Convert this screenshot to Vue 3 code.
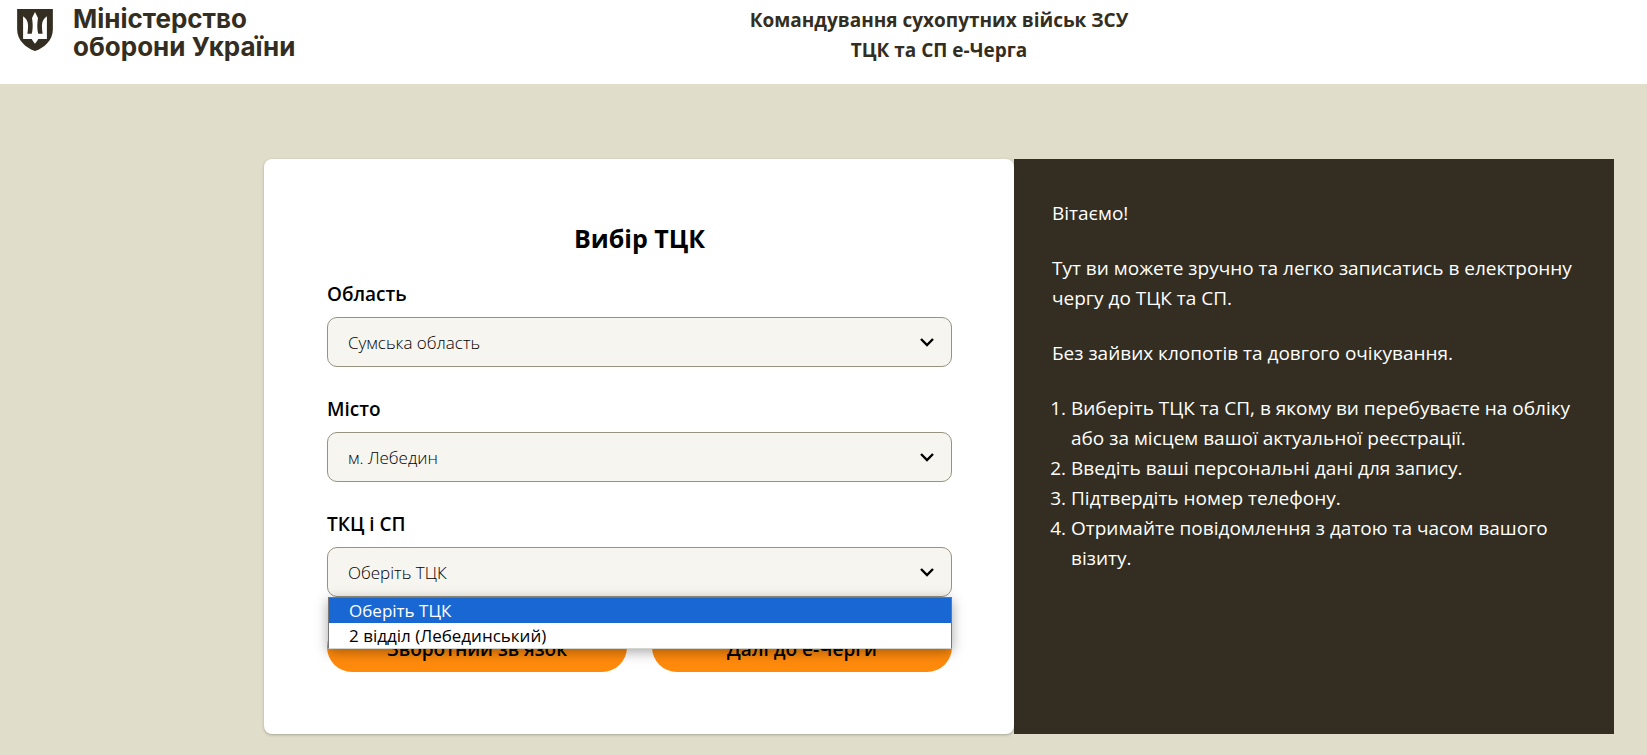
<script setup>
import { ref } from 'vue'

const fields = ref([
  { id: 'region', label: 'Область', value: 'Сумська область', options: ['Сумська область'], open: false },
  { id: 'city', label: 'Місто', value: 'м. Лебедин', options: ['м. Лебедин'], open: false },
  {
    id: 'centre',
    label: 'ТКЦ і СП',
    value: 'Оберіть ТЦК',
    options: ['Оберіть ТЦК', '2 відділ (Лебединський)'],
    open: true,
  },
])

const steps = [
  'Виберіть ТЦК та СП, в якому ви перебуваєте на обліку або за місцем вашої актуальної реєстрації.',
  'Введіть ваші персональні дані для запису.',
  'Підтвердіть номер телефону.',
  'Отримайте повідомлення з датою та часом вашого візиту.',
]

function choose(field, option) {
  field.value = option
  field.open = false
}
</script>

<template>
  <div class="page">
    <header class="header">
      <a class="brand" href="#">
        <svg class="shield" viewBox="0 0 108 127" aria-hidden="true">
          <path d="M0 0H108V62C108 94 82 118 54 127C26 118 0 94 0 62Z" fill="#332e21" />
          <path
            d="M18 22C27 28 33 37 33 50C33 60 32 68 31 75H44C46 68 47 60 47 50C47 42 46 34 45 27C48 21 51 15 54 9C57 15 60 21 63 27C62 34 61 42 61 50C61 60 62 68 64 75H77C76 68 75 60 75 50C75 37 81 28 90 22V91H64C62 95 58 100 54 105C50 100 46 95 44 91H18Z"
            fill="#fff"
          />
        </svg>
        <span class="brand-name">Міністерство<br />оборони України</span>
      </a>
      <div class="title">Командування сухопутних військ ЗСУ<br />ТЦК та СП е-Черга</div>
    </header>

    <main class="main">
      <form class="card" @submit.prevent>
        <h1 class="heading">Вибір ТЦК</h1>

        <div v-for="field in fields" :key="field.id" class="field">
          <label class="label" :for="field.id">{{ field.label }}</label>
          <div class="control">
            <select :id="field.id" v-model="field.value" class="select">
              <option v-for="option in field.options" :key="option">{{ option }}</option>
            </select>
            <svg class="chevron" viewBox="0 0 14 10" aria-hidden="true">
              <path d="M1 2L7 8L13 2" fill="none" stroke="#000" stroke-width="2.4" />
            </svg>
            <ul v-if="field.open" class="menu" role="listbox" :aria-label="field.label">
              <li
                v-for="option in field.options"
                :key="option"
                class="option"
                :class="{ active: option === field.value }"
                role="option"
                :aria-selected="option === field.value"
                @click="choose(field, option)"
              >
                {{ option }}
              </li>
            </ul>
          </div>
        </div>

        <div class="actions">
          <button class="button" type="button">Зворотний зв'язок</button>
          <button class="button" type="submit">Далі до е-Черги</button>
        </div>
      </form>

      <aside class="info">
        <p>Вітаємо!</p>
        <p>Тут ви можете зручно та легко записатись в електронну чергу до ТЦК та СП.</p>
        <p>Без зайвих клопотів та довгого очікування.</p>
        <ol class="steps">
          <li v-for="step in steps" :key="step">{{ step }}</li>
        </ol>
      </aside>
    </main>
  </div>
</template>

<style>
body {
  background: #e0ddca;
}
</style>

<style scoped>
.page {
  min-height: 100vh;
  box-sizing: border-box;
  font-family: 'Open Sans', 'Noto Sans', sans-serif;
  font-size: 19px;
  line-height: 30px;
  color: #000;
}

.header {
  display: grid;
  grid-template-columns: 264px 1fr;
  height: 84px;
  box-sizing: border-box;
  padding: 5px 33px 0 0;
  background: #fff;
  color: #332e21;
}

.brand {
  display: flex;
  align-items: flex-start;
  gap: 20px;
  padding-left: 17px;
  color: inherit;
  text-decoration: none;
  white-space: nowrap;
}

.shield {
  flex: none;
  width: 36px;
  height: 42px;
  margin-top: 4px;
}

.brand-name {
  font-family: Inter, sans-serif;
  font-size: 26px;
  font-weight: 700;
  line-height: 28px;
}

.title {
  font-weight: 700;
  text-align: center;
}

.main {
  display: grid;
  grid-template-columns: 5fr 4fr;
  padding: 75px 33px 21px 264px;
}

.card {
  box-sizing: border-box;
  padding: 62px 62px 62px 63px;
  border-radius: 8px;
  background: #fff;
  box-shadow: 0 1px 3px rgba(0, 0, 0, 0.25);
}

.heading {
  margin: 0;
  font-size: 25px;
  font-weight: 700;
  line-height: 34px;
  text-align: center;
}

.field {
  padding-top: 27px;
}

.heading + .field {
  padding-top: 24px;
}

.label {
  display: block;
  height: 38px;
  font-weight: 600;
}

.control {
  position: relative;
}

.select {
  display: block;
  width: 100%;
  height: 50px;
  padding: 0 48px 0 20px;
  border: 1px solid #96937f;
  border-radius: 10px;
  appearance: none;
  background: #f6f5f0;
  color: #000;
  font: 300 17px 'Open Sans', 'Noto Sans', sans-serif;
}

.chevron {
  position: absolute;
  top: 20px;
  right: 18px;
  width: 14px;
  height: 10px;
  pointer-events: none;
}

.menu {
  position: absolute;
  z-index: 1;
  top: 100%;
  left: 1px;
  right: 0;
  margin: 0;
  padding: 0;
  border: 1px solid #767676;
  border-bottom-color: #d5d5d0;
  background: #fff;
  box-shadow: 0 3px 12px rgba(0, 0, 0, 0.35);
  list-style: none;
}

.option {
  padding-left: 20px;
  font-size: 17px;
  font-weight: 400;
  line-height: 25px;
}

.option.active {
  background: #1967d2;
  color: #fff;
}

.actions {
  display: grid;
  grid-template-columns: 1fr 1fr;
  gap: 25px;
  padding-top: 25px;
}

.button {
  height: 50px;
  padding: 3px 16px 0;
  border: 0;
  border-radius: 25px;
  background: #ff8a0c;
  color: #000;
  font: 600 19px 'Open Sans', 'Noto Sans', sans-serif;
}

.info {
  padding: 39px 38px;
  background: #332e21;
  color: #fff;
}

.info p {
  margin: 0 0 25px;
}

.steps {
  margin: 0;
  padding-left: 19px;
}
</style>
